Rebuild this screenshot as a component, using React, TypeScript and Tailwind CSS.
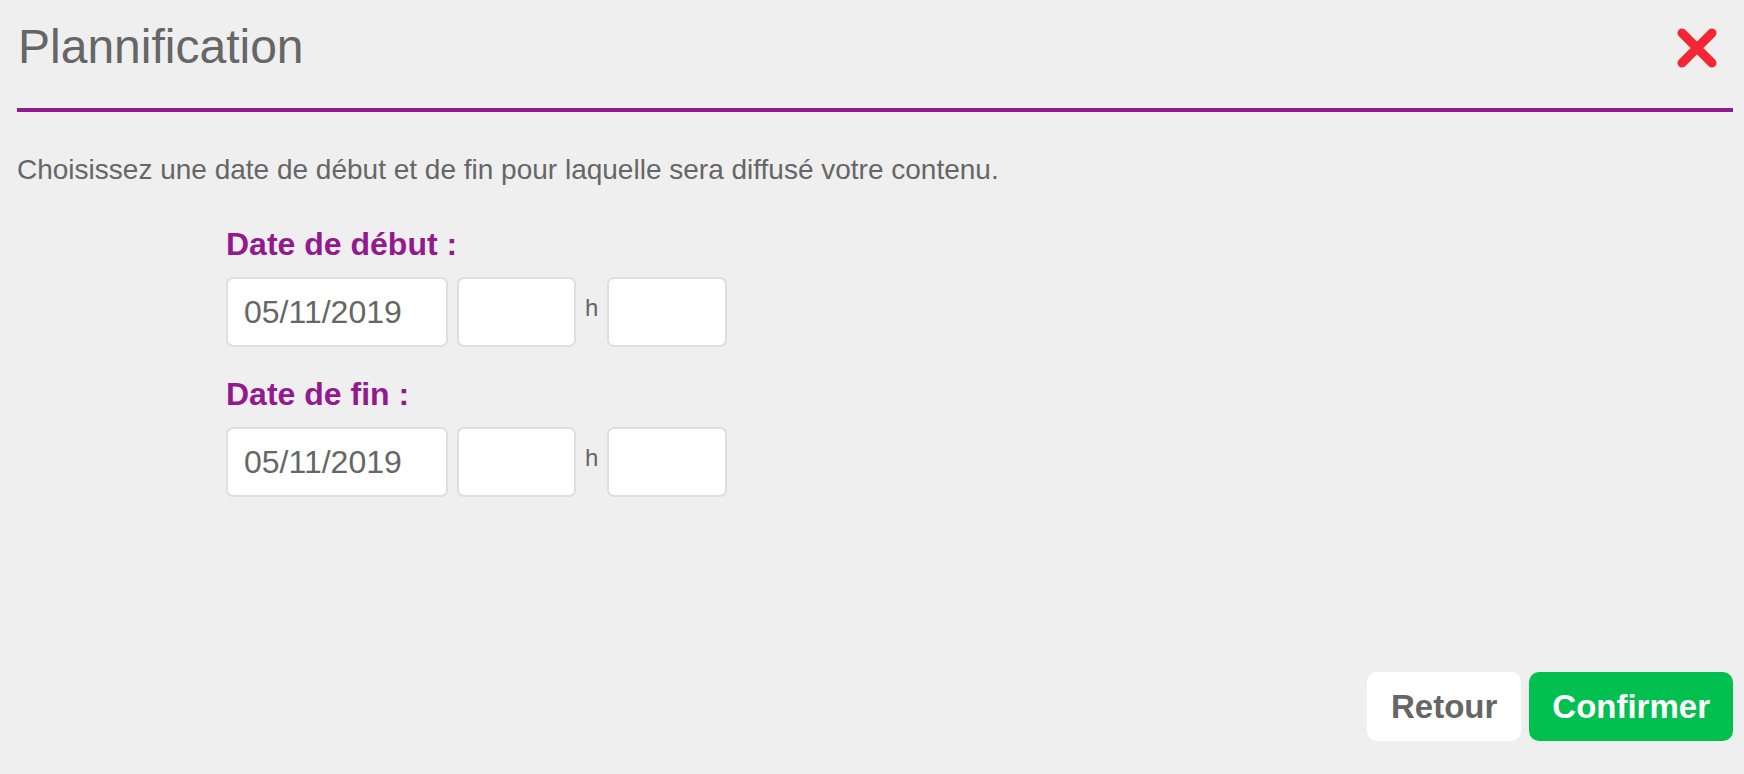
import React from 'react';

const font = { fontFamily: '"Liberation Sans", Arial, Helvetica, sans-serif' };

function CloseIcon() {
  return (
    <svg width="42" height="42" viewBox="0 0 42 42" fill="none">
      <path d="M6 6 L36 36 M36 6 L6 36" stroke="#f32636" strokeWidth="9" strokeLinecap="round" />
    </svg>
  );
}

function DateRow({ label, date }: { label: string; date: string }) {
  return (
    <div className="flex flex-col">
      <div className="text-[32px] leading-[36px] font-bold text-[#931a8e]">{label}</div>
      <div className="mt-[15px] flex items-center gap-[9px]">
        <div className="w-[222px] h-[70px] bg-white border-2 border-[#dedede] rounded-[7px] flex items-center pl-[16px] text-[32px] text-[#666666]">
          {date}
        </div>
        <div className="w-[119px] h-[70px] bg-white border-2 border-[#dedede] rounded-[7px]" />
        <span className="text-[24px] text-[#666666] -mt-[8px]">h</span>
        <div className="w-[120px] h-[70px] bg-white border-2 border-[#dedede] rounded-[7px]" />
      </div>
    </div>
  );
}

export default function App() {
  return (
    <div className="h-[774px] w-full bg-[#efefef] flex flex-col pl-[17px] pr-[11px]" style={font}>
      {/* Header */}
      <div className="flex items-center justify-between pt-[23px] pb-[37px]">
        <h1 className="text-[48px] leading-[48px] text-[#666666] ml-[1px]">Plannification</h1>
        <div className="mr-[15px] mt-[2px]">
          <CloseIcon />
        </div>
      </div>
      <div className="h-[4px] bg-[#921a8d]" />

      <p className="mt-[42px] text-[28px] leading-[32px] text-[#666666]">
        Choisissez une date de début et de fin pour laquelle sera diffusé votre contenu.
      </p>

      <div className="ml-[209px] mt-[40px] flex flex-col gap-[29px]">
        <DateRow label="Date de début :" date="05/11/2019" />
        <DateRow label="Date de fin :" date="05/11/2019" />
      </div>

      <div className="mt-auto pb-[33px] flex justify-end gap-[8px]">
        <button className="h-[69px] px-[24px] bg-white rounded-[10px] text-[33px] font-bold text-[#666666]">
          Retour
        </button>
        <button className="h-[69px] px-[23px] bg-[#02c04f] rounded-[10px] text-[33px] font-bold text-white">
          Confirmer
        </button>
      </div>
    </div>
  );
}
